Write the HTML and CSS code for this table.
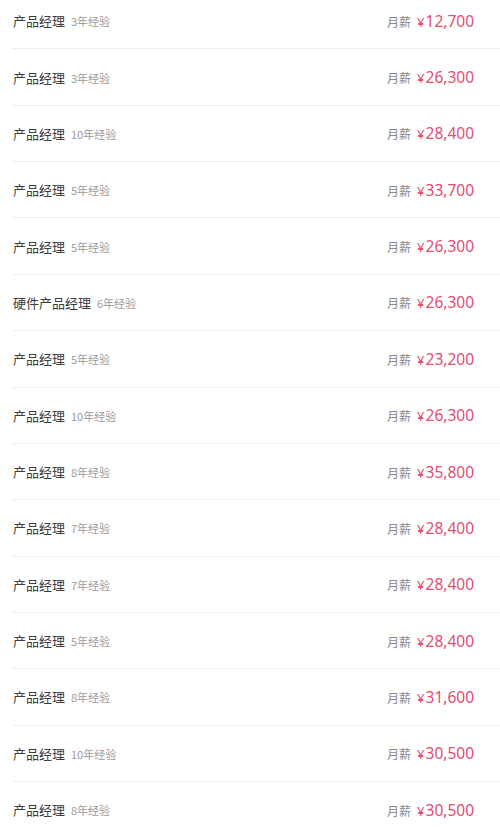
FILE: index.html
```
<!DOCTYPE html>
<html lang="zh">
<head>
<meta charset="utf-8">
<link rel="stylesheet" href="styles.css">
</head>
<body>
<ul class="list">
  <li class="row"><div class="left"><span class="title">产品经理</span><span class="exp">3年经验</span></div><div class="right"><span class="label">月薪</span><span class="salary"><span class="yen">¥</span>12,700</span></div></li>
  <li class="row"><div class="left"><span class="title">产品经理</span><span class="exp">3年经验</span></div><div class="right"><span class="label">月薪</span><span class="salary"><span class="yen">¥</span>26,300</span></div></li>
  <li class="row"><div class="left"><span class="title">产品经理</span><span class="exp">10年经验</span></div><div class="right"><span class="label">月薪</span><span class="salary"><span class="yen">¥</span>28,400</span></div></li>
  <li class="row"><div class="left"><span class="title">产品经理</span><span class="exp">5年经验</span></div><div class="right"><span class="label">月薪</span><span class="salary"><span class="yen">¥</span>33,700</span></div></li>
  <li class="row"><div class="left"><span class="title">产品经理</span><span class="exp">5年经验</span></div><div class="right"><span class="label">月薪</span><span class="salary"><span class="yen">¥</span>26,300</span></div></li>
  <li class="row"><div class="left"><span class="title">硬件产品经理</span><span class="exp">6年经验</span></div><div class="right"><span class="label">月薪</span><span class="salary"><span class="yen">¥</span>26,300</span></div></li>
  <li class="row"><div class="left"><span class="title">产品经理</span><span class="exp">5年经验</span></div><div class="right"><span class="label">月薪</span><span class="salary"><span class="yen">¥</span>23,200</span></div></li>
  <li class="row"><div class="left"><span class="title">产品经理</span><span class="exp">10年经验</span></div><div class="right"><span class="label">月薪</span><span class="salary"><span class="yen">¥</span>26,300</span></div></li>
  <li class="row"><div class="left"><span class="title">产品经理</span><span class="exp">8年经验</span></div><div class="right"><span class="label">月薪</span><span class="salary"><span class="yen">¥</span>35,800</span></div></li>
  <li class="row"><div class="left"><span class="title">产品经理</span><span class="exp">7年经验</span></div><div class="right"><span class="label">月薪</span><span class="salary"><span class="yen">¥</span>28,400</span></div></li>
  <li class="row"><div class="left"><span class="title">产品经理</span><span class="exp">7年经验</span></div><div class="right"><span class="label">月薪</span><span class="salary"><span class="yen">¥</span>28,400</span></div></li>
  <li class="row"><div class="left"><span class="title">产品经理</span><span class="exp">5年经验</span></div><div class="right"><span class="label">月薪</span><span class="salary"><span class="yen">¥</span>28,400</span></div></li>
  <li class="row"><div class="left"><span class="title">产品经理</span><span class="exp">8年经验</span></div><div class="right"><span class="label">月薪</span><span class="salary"><span class="yen">¥</span>31,600</span></div></li>
  <li class="row"><div class="left"><span class="title">产品经理</span><span class="exp">10年经验</span></div><div class="right"><span class="label">月薪</span><span class="salary"><span class="yen">¥</span>30,500</span></div></li>
  <li class="row"><div class="left"><span class="title">产品经理</span><span class="exp">8年经验</span></div><div class="right"><span class="label">月薪</span><span class="salary"><span class="yen">¥</span>30,500</span></div></li>
</ul>
</body>
</html>
```
FILE: styles.css
```
html, body {
  margin: 0;
  padding: 0;
  background: #fff;
  overflow: hidden;
}
body {
  font-family: "Noto Sans CJK SC", "Noto Sans", sans-serif;
}
.list {
  list-style: none;
  margin: -7px 0 0 12px;
  padding: 0;
}
.row {
  box-sizing: border-box;
  height: 56.36px;
  border-bottom: 1px solid #eeeeee;
  display: flex;
  align-items: center;
  justify-content: space-between;
  padding: 0 26px 0 1px;
}
.left {
  display: flex;
  align-items: baseline;
  gap: 6px;
}
.title {
  font-size: 13px;
  color: #3c3c3c;
}
.exp {
  font-size: 11px;
  color: #9a9a9a;
}
.right {
  display: flex;
  align-items: baseline;
  gap: 6px;
}
.label {
  font-size: 12px;
  color: #888;
}
.salary {
  font-family: "Noto Sans", Roboto, sans-serif;
  font-size: 15.5px;
  color: #e24d71;
}
.yen {
  font-size: 13px;
  margin-right: 1px;
}
```
